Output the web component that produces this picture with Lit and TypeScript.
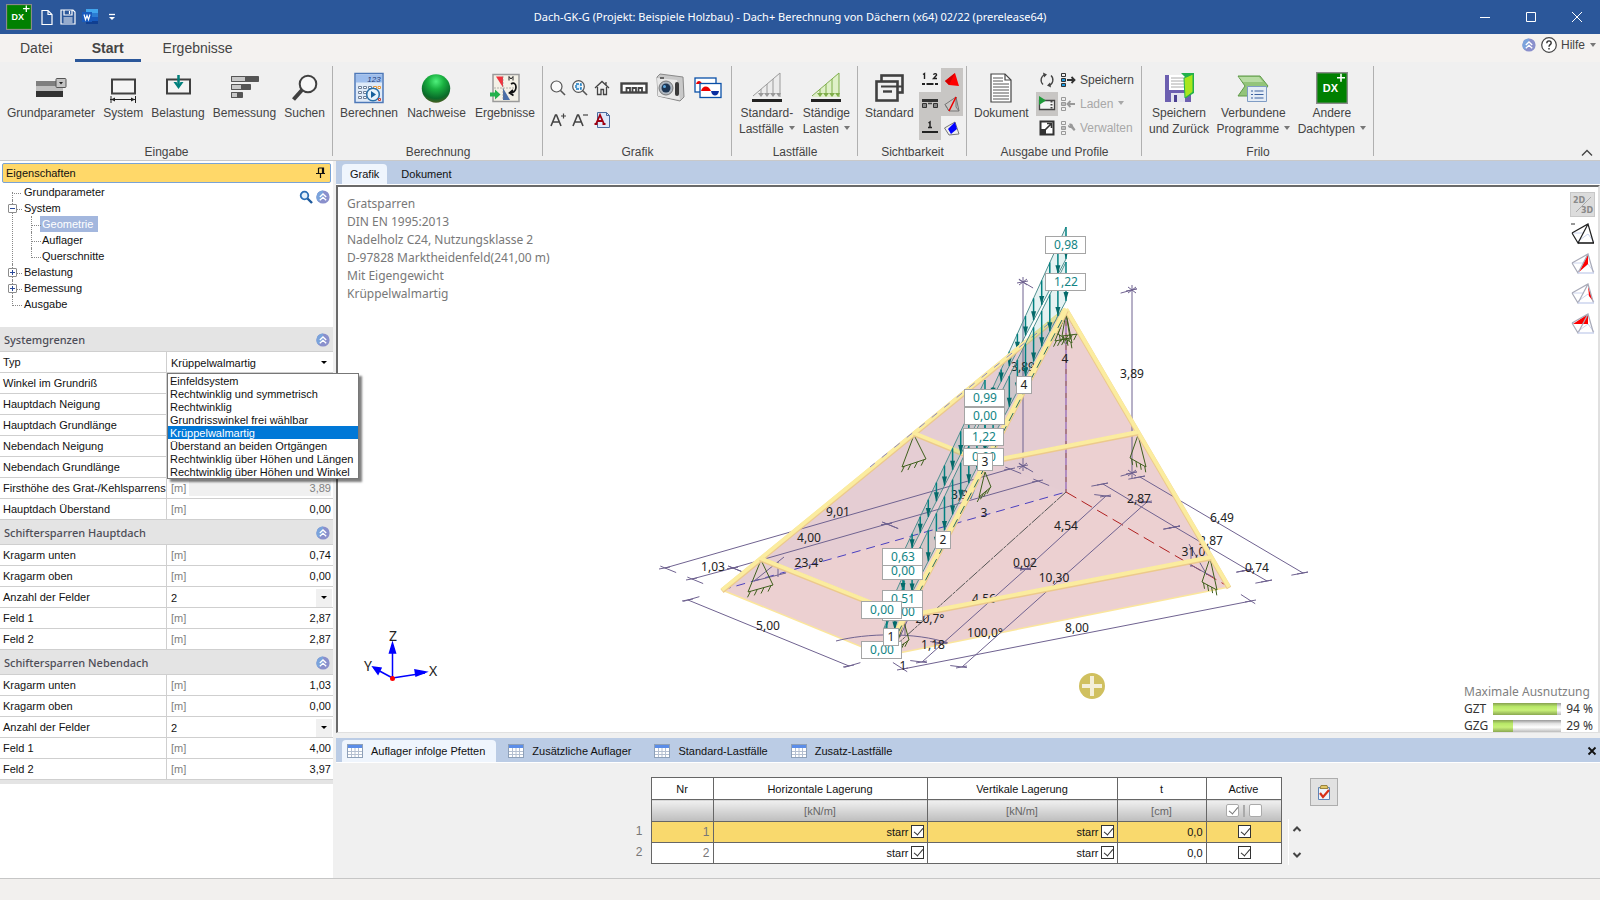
import { LitElement, html, svg, css, nothing, TemplateResult } from "lit";
import { customElement, state } from "lit/decorators.js";
import { classMap } from "lit/directives/class-map.js";

const icon = (w: number, h: number, body: TemplateResult) =>
  html`<svg class="ico" width=${w} height=${h} viewBox="0 0 ${w} ${h}" aria-hidden="true">${body}</svg>`;

/* ---------- ribbon icons ---------- */
const dxIcon = (s: number) => html`<svg class="ico" width=${s} height=${s} viewBox="0 0 32 32" aria-hidden="true">
  <rect x=".7" y=".7" width="30.6" height="30.6" fill="#008000" stroke="#8a8a8a" stroke-width="1.4"/>
  <text x="14.5" y="20" font-family="Liberation Sans Narrow, Liberation Sans, sans-serif" font-weight="bold" font-size="11" fill="#fff" text-anchor="middle">DX</text>
  <path d="M21 5.7h8M25 1.7v8" stroke="#fff" stroke-width="1.6"/></svg>`;
const iGrund = icon(32, 32, svg`<rect x="1" y="9" width="27" height="6" fill="#7f7f7f"/><rect x="1" y="14" width="27" height="6" fill="#bfbfbf"/><rect x="1" y="19" width="27" height="6" fill="#333"/><rect x="21" y="6.500" width="10" height="9" rx="1" fill="#c4c4c4" stroke="#555"/><path d="M24 10h4l-2 2.500z" fill="#222"/>`);
const iSystem = icon(32, 32, svg`<rect x="5" y="7.500" width="23" height="14" fill="#f4f4f4" stroke="#404040" stroke-width="2"/><path d="M3 27.500h26M4 24v7M28.500 24v7" stroke="#222" fill="none"/><path d="M4 27.500l4-2v4zM28 27.500l-4-2v4z" fill="#222"/>`);
const iLoad = icon(32, 32, svg`<rect x="5" y="7.500" width="23" height="14" fill="#f4f4f4" stroke="#404040" stroke-width="2"/><path d="M16.500 3v12" stroke="#00807c" stroke-width="2.500"/><path d="M11.500 10h3l2 3 2-3h3l-5 7z" fill="#00807c"/>`);
const iBem = icon(32, 32, svg`<g stroke="#555"><path fill="#555" d="M3.500 4.500h27v5h-27zM3.500 12.500h19v5h-19zM3.500 20.500h11v5h-11z"/><path fill="#c8c8c8" d="M3.500 4.500h14v5h-14zM3.500 12.500h10v5h-10zM3.500 20.500h6v5h-6z"/></g>`);
const iFind = icon(32, 32, svg`<circle cx="19" cy="12" r="8.300" fill="#f7f7f7" stroke="#404040" stroke-width="2"/><path d="M13 18L4.500 27.500" stroke="#404040" stroke-width="4"/>`);
const iCalc = icon(32, 32, svg`<rect x="2" y="1.500" width="28" height="29" fill="#dfeaf8" stroke="#4d78b8" stroke-width="1.500"/><rect x="3" y="2.500" width="26" height="8" fill="#9dbdec"/><text x="21" y="9.500" font-family="Liberation Sans, sans-serif" font-size="8" font-style="italic" text-anchor="middle" fill="#1d3c78">123</text><g fill="#fff" stroke="#6d7f99"><path d="M5.500 14.500h3v2h-3zM10.500 14.500h3v2h-3zM15.500 14.500h3v2h-3zM5.500 19.500h3v2h-3zM10.500 19.500h3v2h-3zM5.500 24.500h3v2h-3zM10.500 24.500h3v2h-3z"/><path d="M20.500 14.500h3v2h-3zM25 14.500h2.500v2h-2.500z" stroke="#e89a3c"/></g><circle cx="20" cy="22.500" r="6.300" fill="#e8f3fb" stroke="#2a70a8" stroke-width="1.500"/><path d="M18 19l5 3.500-5 3.500z" fill="#17609c"/><path d="M25.500 26.500h2v2h-2z" stroke="#d04030" fill="none"/>`);
const iBall = html`<svg class="ico" width="32" height="32" viewBox="0 0 32 32" aria-hidden="true"><defs><radialGradient id="gb" cx=".5" cy=".25" r=".8"><stop offset="0" stop-color="#4ff07c"/><stop offset=".35" stop-color="#19b040"/><stop offset=".75" stop-color="#0a6b2a"/><stop offset="1" stop-color="#5a5a20"/></radialGradient></defs><circle cx="16" cy="16.500" r="14.200" fill="url(#gb)"/></svg>`;
const iErg = icon(32, 32, svg`<rect x="4" y="2.500" width="26" height="27" fill="#f4f1e6" stroke="#9a9a9a" stroke-width="1.500"/><path d="M7 4.500h7v11z" fill="#f0323c"/><path d="M14 16v12h7z" fill="#4a6fa8"/><path d="M14 4v24M5 16h24" stroke="#888" stroke-dasharray="2 1" stroke-width=".6"/><path d="M22 12c3-2 5 0 5 3 0 4-3 6-6 6M24 18l-3.500 3 4 2.500" fill="none" stroke="#111" stroke-width="1.700"/><path d="M20 8.500v-4l2 2.500 2-2.500v4" fill="none" stroke="#222"/><path d="M1 20.500h5v-3l5.500 5-5.500 5v-3h-5z" fill="#22b14c"/>`);
const iZoom = icon(18, 18, svg`<circle cx="7.500" cy="7.500" r="5.500" fill="#fafafa" stroke="#555" stroke-width="1.200"/><path d="M11.500 11.500l4.500 4.500" stroke="#555" stroke-width="1.600"/>`);
const iZoomWin = icon(18, 18, svg`<circle cx="7.500" cy="7.500" r="5.800" fill="#fafafa" stroke="#555" stroke-width="1.200"/><path d="M11.500 11.500l4.500 4.500" stroke="#555" stroke-width="1.600"/><rect x="5" y="5" width="5" height="5" fill="#d8ecfa" stroke="#1879c0" stroke-width="1.400" stroke-dasharray="3 1"/>`);
const iHome = icon(18, 18, svg`<path d="M2 9l7-6.500 7 6.500M4.500 8v7.500h3.500v-5h2.500v5h3v-7.500M13 3v3" fill="none" stroke="#444" stroke-width="1.300"/>`);
const iRuler = icon(28, 16, svg`<rect x="1.500" y="3.500" width="25" height="9" fill="#fff" stroke="#444" stroke-width="2.400"/><path d="M6.500 12V8h3.500V12M12.500 12V8h3.500V12M18.500 12V8h3.500V12" fill="none" stroke="#444" stroke-width="1.800"/>`);
const iCam = icon(32, 32, svg`<path d="M2 5l3-3 23 3 1 20-4 4-22-5z" fill="#c9c9c9" stroke="#8a8a8a"/><path d="M2 6l20 2 3 20-22-4z" fill="#e8e8e8"/><rect x="20" y="10" width="4" height="14" rx="2" fill="#3a3a3a"/><circle cx="11" cy="16" r="7" fill="#aeb6bf" stroke="#777"/><circle cx="11" cy="16" r="4.500" fill="#1d3552"/><circle cx="9.500" cy="14.500" r="1.500" fill="#5da8e0"/><path d="M5 6h4" stroke="#666" stroke-width="2"/>`);
const iChart = icon(28, 24, svg`<rect x="1" y="2" width="21" height="14" fill="#fff" stroke="#0a50a8" stroke-width="1.300"/><path d="M2 8h6c-1-4-5-4-6 0z" fill="#e00"/><rect x="6" y="7.500" width="21" height="14" fill="#fff" stroke="#0a50a8" stroke-width="1.300"/><path d="M7 15c1-5 7-7 10 0z" fill="#e00"/><path d="M17 15c1 6 7 6 8 0z" fill="#0a2ea0"/>`);
const iAplus = icon(18, 18, svg`<path d="M2 15L6.500 4h1L12 15M4 11h6" fill="none" stroke="#444" stroke-width="1.600"/><path d="M12 5h5M14.500 2.500v5" stroke="#444" stroke-width="1.200"/>`);
const iAminus = icon(18, 18, svg`<path d="M2 15L6.500 4h1L12 15M4 11h6" fill="none" stroke="#444" stroke-width="1.600"/><path d="M12 4h5" stroke="#444" stroke-width="1.200"/>`);
const iAdoc = icon(18, 18, svg`<path d="M4.500 1.500h9l3 3v12h-12z" fill="#dde8fa" stroke="#4a6a9e"/><path d="M13.500 1.500v3h3" fill="none" stroke="#4a6a9e"/><path d="M3 13l4-9 4 9M4.500 10h5M1.500 13h3M9.500 13h3" fill="none" stroke="#a00010" stroke-width="1.800"/>`);
const iLoads = (c: string, f: string) => icon(32, 32, svg`<path d="M2 25L29 1v24z" fill=${f}/><path d="M2 24L29 1v24M22 7v17M16 12v12M10 17v7" fill="none" stroke=${c}/><path d="M7 21l3 4 3-4zM13 21l3 4 3-4zM19 21l3 4 3-4zM25 21l3 4 2-4z" fill=${c}/><path d="M1 28.500h30" stroke="#222" stroke-width="3"/>`);
const iStd = icon(32, 32, svg`<rect x="8.500" y="3.500" width="21" height="17" fill="none" stroke="#404040" stroke-width="2.600"/><rect x="3.500" y="9.500" width="21" height="19" fill="#f0f0f0" stroke="#404040" stroke-width="2.600"/><path d="M8 14.500h21" stroke="#404040" stroke-width="2"/><path d="M10 19.500h9" stroke="#404040" stroke-width="2.400"/>`);
const i12 = icon(18, 18, svg`<path d="M2 3.500L3.500 2.500V8M12.500 3.800c.5-1.800 3.300-1.500 3 .300L12.500 7.500h3.500" fill="none" stroke="#222" stroke-width="1.400"/><path d="M1 13h3M5.500 13h7M14 13h3" stroke="#222" stroke-width="1.800"/>`);
const iBridge = icon(18, 18, svg`<path d="M1 5.500h16" stroke="#333" stroke-width="3"/><path d="M1.500 8.500h4v4h-4zM12.500 8.500h4v4h-4z" fill="#888" stroke="#333"/><path d="M7 8.500h4" stroke="#444" stroke-width="1.500"/>`);
const iOne = icon(18, 18, svg`<path d="M7.500 4L9 3v5.500M7 8.500h4" fill="none" stroke="#222" stroke-width="1.500"/><path d="M1 13h16" stroke="#222" stroke-width="2"/>`);
const iRoofRed = icon(18, 18, svg`<path d="M2 10L12 2l4 13-10-1z" fill="#f00"/><path d="M2 10L12 2 6 14z" fill="#d40000"/>`);
const iRoofLine = icon(18, 18, svg`<path d="M2 9.500L13 2l3 14H6zM2 9.500L6 16M13 2v10l3 4" fill="none" stroke="#777"/><path d="M13 2L6 16" stroke="#e00" stroke-width="1.500"/>`);
const iRoofBlue = icon(18, 18, svg`<path d="M1.500 9L12 3l4 12-10 1z" fill="#eee" stroke="#777"/><path d="M12 3L5 10l3 5 6-5z" fill="#00f"/>`);
const iDoc = icon(32, 32, svg`<path d="M6 2h14l6 6v22H6z" fill="#fff" stroke="#444" stroke-width="1.200"/><path d="M20 2v6h6" fill="none" stroke="#444" stroke-width="1.200"/><path d="M8 6h10M8 9h10M8 12h16M8 15h16M8 18h16M8 21h16M8 24h16M8 27h16" stroke="#555"/>`);
const iSync = icon(18, 18, svg`<path d="M7 3.500a6 6 0 0 0-2 10M11 14.500a6 6 0 0 0 2-10" fill="none" stroke="#444" stroke-width="1.300"/><path d="M5 1.500l4 2-3 3zM13 16.500l-4-2 3-3z" fill="#444"/>`);
const iRun = icon(18, 18, svg`<path d="M1.500 5.500h15v9h-15z" fill="#f4f4f4" stroke="#444" stroke-width="1.300"/><path d="M13.500 6v8" stroke="#444" stroke-dasharray="1.500 1.500" stroke-width="2"/><path d="M1 1l7 4.500L1 10z" fill="#1f9a3a"/>`);
const iExport = icon(18, 18, svg`<rect x="2.500" y="2.500" width="13" height="13" fill="#fff" stroke="#333" stroke-width="2"/><path d="M2 10h6v6H2z" fill="#333"/><path d="M7 11l6-6M9 4.500h4.500V9" fill="none" stroke="#333" stroke-width="1.600"/>`);
const iProf = (kind: string) => icon(15, 14, svg`<g fill="none" stroke=${kind === "save" ? "#333" : "#999"}><path d="M.500.500h4v3h-4z"/><path d="M.500 5.500h4v3h-4z" fill=${kind === "save" ? "#1e9be0" : "#bbb"}/><path d="M.500 10.500h4v3h-4z" fill=${kind === "save" ? "#1e9be0" : "none"}/></g>${
  kind === "save" ? svg`<path d="M6 7h7M10.500 4l3 3-3 3" fill="none" stroke="#333" stroke-width="1.800"/>`
  : kind === "load" ? svg`<path d="M14 7H7M9.500 4l-3 3 3 3" fill="none" stroke="#999" stroke-width="1.800"/>`
  : svg`<path d="M8 3c2-1 4 0 4 2l2.500 3.500-1.500 1.500L10 7C8 7.500 6.500 5.500 7 4l2 1z" fill="#999"/>`}`);
const iSaveBack = icon(32, 32, svg`<path d="M2 3h26v27H2z" fill="#6c5fb0"/><path d="M6 3h17v15H6z" fill="#fff"/><path d="M8 6h13M8 9h13M8 12h13M8 15h13" stroke="#aaa"/><path d="M8 21h14v9H8z" fill="#e2e2ee"/><path d="M11 23h3v7h-3z" fill="#4a3f90"/><path d="M18 1h13v20l-8 5V6z" fill="#22b14c"/><path d="M21 6l9-4v18l-8 6z" fill="#a8e61d" stroke="#22b14c"/>`);
const iVerb = icon(32, 32, svg`<path d="M1 4h22l8 10-8 10H1l7-10z" fill="#93c47a" stroke="#5f9a48"/><path d="M2 5h20l4 5H6z" fill="#b7dca3"/><path d="M10.500 14.500h19v15h-19z" fill="#e4ecf6" stroke="#7f9cc4"/><path d="M14 19h2M17.500 19h9M14 22.500h2M17.500 22.500h9M14 26h2M17.500 26h9" stroke="#3c62a0"/>`);

const roofIcon = (fill: string | null, strong = false) => html`<svg class="ico" width="24" height="22" viewBox="0 0 24 22" aria-hidden="true">
  <path d="M6 19L17 11l6 8M1 10h12" fill="none" stroke="#ccd5ee"/>${fill ? svg`<path d=${fill} fill="#f00"/>` : nothing}
  <path d="M1 10L17 1l5.500 19M1 10l6 10L17 1" fill="none" stroke=${strong ? "#222" : "#a9abb9"} stroke-width="1.200"/>
  <path d="M7 20h16" stroke=${strong ? "#111" : "#ccd5ee"} stroke-width="1.500"/>
  ${strong ? svg`<path d="M0 1h4" stroke="#333"/>` : nothing}</svg>`;
const iTable = icon(16, 16, svg`<rect x=".500" y="1.500" width="15" height="13" fill="#fff" stroke="#8ea0b8"/><rect x="1" y="2" width="14" height="3" fill="#5b8de8"/><path d="M1 8.500h14M1 11.500h14M4.500 5v9M8 5v9M11.500 5v9" stroke="#b4bfd0"/>`);
const iClip = icon(16, 18, svg`<path d="M2.500 4.500h11v12h-11z" fill="#eef4fb" stroke="#5e84b8"/><path d="M5 2.500h6l1 3H4z" fill="#e2c766" stroke="#9a8440"/><path d="M4 10l3 4 6-7" fill="none" stroke="#d83018" stroke-width="2.200"/>`);
const iUp = html`<svg class="ico" width="14" height="14" viewBox="0 0 14 14" aria-hidden="true"><circle cx="7" cy="7" r="6.600" fill="#8a90cc"/><path d="M7 .4A6.600 6.600 0 0 0 .4 7c0 2 .8 3.600 2 4.700L7 8z" fill="#7ba4dc"/><path d="M3.800 7L7 4l3.200 3M3.800 10.300L7 7.300l3.200 3" fill="none" stroke="#fff" stroke-width="1.300"/></svg>`;

/* ---------- roof model drawing ---------- */
type P = [number, number];
const A: P = [1066, 309], B: P = [1066, 492], L: P = [722, 590], R: P = [1229, 587], F: P = [884, 656];
const pts = (...p: P[]) => p.map((q) => q.join(",")).join(" ");
const lerp = (a: P, b: P, x: number) => a[1] + ((x - a[0]) * (b[1] - a[1])) / (b[0] - a[0]);

const dims: [number, number, number, number, number, number][] = [
  [665, 568, 1010, 469, 0.93, 0.38], [692, 579, 733, 568, 0.93, 0.38], [733, 568, 887, 524, 0.93, 0.38], [887, 524, 1038, 481, 0.93, 0.38],
  [688, 600, 849, 666, 0.95, -0.28], [903, 669, 1251, 601, -0.84, -0.54],
  [962, 667, 1147, 502, -0.98, -0.12], [922, 662, 1026, 569, -0.98, -0.12], [1026, 569, 1106, 496, -0.98, -0.12],
  [1140, 477, 1303, 573, -0.97, 0.18], [1103, 484, 1175, 527, -0.97, 0.18], [1175, 527, 1248, 570, -0.97, 0.18], [1248, 570, 1267, 581, -0.97, 0.18],
  [1023, 277, 1023, 471, 0.84, 0.5], [1132, 285, 1132, 478, -0.95, 0.26],
];
const tick = (x: number, y: number, wx: number, wy: number) =>
  svg`<path d="M${x - wx * 5} ${y - wy * 5}L${x + wx * 12} ${y + wy * 12}M${x - 6} ${y + 1}L${x + 5} ${y - 1}"/>`;
const tickOf = (d: [number, number, number, number, number, number]) => {
  const upright = d[0] === d[2];
  const over = upright ? 5 : 0;
  const cross = (x: number, y: number) => (upright ? svg`<path d="M${x - 4} ${y - 3}l8 6M${x - 4} ${y + 3}l8-6"/>` : nothing);
  return svg`${tick(d[0], d[1] + over, d[4], d[5])}${cross(d[0], d[1] + over)}${tick(d[2], d[3] - over, d[4], d[5])}${cross(d[2], d[3] - over)}`;
};

const notes: [number, number, string][] = [
  [838, 512, "9,01"], [809, 538, "4,00"], [713, 567, "1,03"], [809, 563, "23,4°"], [768, 626, "5,00"], [963, 495, "3,97"],
  [984, 513, "3"], [1065, 359, "4"], [1023, 367, "3,89"], [1132, 374, "3,89"], [1066, 526, "4,54"], [1139, 499, "2,87"],
  [1222, 518, "6,49"], [1211, 541, "2,87"], [1196, 552, "31,0°"], [1257, 568, "0,74"], [1025, 563, "0,02"], [1054, 578, "10,30"],
  [984, 599, "4,56"], [1077, 628, "8,00"], [985, 633, "100,0°"], [933, 645, "1,18"], [930, 619, "20,7°"], [903, 666, "1"],
];
const loadTags: [number, number, string][] = [
  [1066, 245, "0,98"], [1066, 282, "1,22"], [985, 398, "0,99"], [985, 416, "0,00"], [984, 437, "1,22"], [984, 457, "0,00"],
  [903, 571, "0,00"], [903, 557, "0,63"], [903, 612, "0,00"], [903, 599, "0,51"], [882, 610, "0,00"], [882, 650, "0,00"],
];
const nodes: [number, number, string][] = [[1024, 385, "4"], [985, 462, "3"], [943, 540, "2"], [891, 637, "1"]];

const bands: [P, P, P, P][] = [
  [[1066, 227], [985, 405], [985, 412], [1066, 259]],
  [[1066, 262], [985, 425], [985, 452], [1066, 301]],
  [[985, 380], [903, 553], [903, 566], [985, 407]],
  [[985, 412], [903, 583], [903, 610], [985, 452]],
  [[903, 576], [884, 618], [884, 630], [903, 592]],
  [[903, 587], [884, 628], [884, 650], [903, 616]],
];
const band = ([a, b, c, d]: [P, P, P, P]) => {
  const xs: number[] = [];
  for (let x = a[0]; x >= b[0]; x -= 8.1) xs.push(x);
  return svg`<polygon points=${pts(a, b, c, d)} fill="#008080" fill-opacity=".1"/>
    <path d="M${a}L${b}M${d}L${c}" stroke="#4f8f8f" fill="none"/>
    ${xs.map((x) => {
      const t = lerp(a, b, x), e = lerp(d, c, x);
      return svg`<path d="M${x} ${t}V${e}" stroke="#008080" stroke-width="1.500"/><path d="M${x - 2.5} ${e - 9}h5L${x} ${e}z" fill="#046a6a"/>`;
    })}`;
};
const support = (p: P, q: P, r: P) => {
  const k = [0.1, 0.37, 0.64, 0.92];
  return svg`<path d="M${q}L${p}L${r}z${k.map((t) => {
    const x = q[0] + (r[0] - q[0]) * t, y = q[1] + (r[1] - q[1]) * t;
    return `M${x} ${y}l${r[1] > q[1] ? 1 : -3} 6`;
  }).join("")}" fill="none" stroke="#3f5f1c"/>`;
};
const beam = (a: P, b: P, w = 5) => svg`<path d="M${a}L${b}" stroke="#ecc98c" stroke-width=${w} transform="translate(0 1)"/><path d="M${a}L${b}" stroke="#fbec9f" stroke-width=${w - 1}/>`;
const label = (x: number, y: number, t: string, fill = "#222") =>
  svg`<text x=${x} y=${y + 4} text-anchor="middle" fill=${fill}>${t}</text>`;

const scene = html`<svg class="scene" viewBox="338 187 1260 545" role="img" aria-label="3D-Ansicht des Dachtragwerks">
  <polygon points=${pts(L, A, R, F)} fill="#ecd0d1"/>
  <polygon points=${pts(L, A, B)} fill="#e5cdd3"/>
  <polygon points=${pts(A, [985, 462], B)} fill="#e4ccd2"/>
  <path d="M${L}L${F}L${R}" fill="none" stroke="#fbe69c" stroke-width="1.500"/>
  <path d="M${L}L${B}" stroke="#4a40c0" stroke-dasharray="9 6" fill="none"/>
  <path d="M${B}L${R}" stroke="#b02020" stroke-dasharray="12 6" fill="none"/>
  <path d="M${B}L${F}" stroke="#555" stroke-dasharray="12 1 3 1" fill="none"/>
  <path d="M${A}V492" stroke="#7a4ab0" fill="none"/><path d="M${A}V492" stroke="#a06a50" stroke-dasharray="5 7" fill="none"/>
  <g stroke="#6f6290" fill="none">
    ${dims.map((d) => svg`<path d="M${d[0]} ${d[1]}L${d[2]} ${d[3]}"/>${tickOf(d)}`)}
    ${tick(942, 643, -0.98, -0.12)}
    <path d="M754 581L784 557M754 581L786 573M778 562v15M1189 544l18 31M1187 563l26 14M1191 547v20M836 641c30-8 80-9 112 2M900 637l8-18M905 620v15"/>
  </g>
  ${notes.map(([x, y, t]) => label(x, y, t))}
  ${support([914, 435], [902, 467], [926, 459])}${support([761, 560], [748, 592], [773, 585])}
  ${support([1138, 435], [1130, 458], [1146, 467])}${support([1210, 558], [1202, 582], [1217, 590])}
  ${support([985, 472], [979, 497], [991, 487])}${support([904, 622], [895, 650], [909, 640])}
  ${support([1066, 313], [1055, 341], [1070, 338])}${support([1066, 313], [1062, 336], [1078, 334])}${support([1066, 313], [1058, 334], [1072, 343])}
  ${bands.slice(0, 1).map(band)}
  ${beam(L, A)}
  <path d="M1062 313L870 467" stroke="#8a86c8" stroke-dasharray="7 9" fill="none"/>
  ${beam(A, R)}${beam([914, 433], [985, 462])}${beam([985, 462], [1138, 432])}${beam([760, 558], [905, 616])}${beam([905, 616], [1211, 557])}
  ${bands.slice(1).map(band)}
  ${beam(A, [887, 650], 6)}
  <path d="M1062 320L890 648" stroke="#2c6a60" stroke-dasharray="9 6" fill="none"/>
  ${loadTags.map(([x, y, t]) => svg`<rect x=${x - 20.5} y=${y - 8.5} width="40" height="17" fill="#fff" stroke="#a5a5a5"/>${label(x, y, t, "#128484")}`)}
  ${nodes.map(([x, y, t]) => svg`<rect x=${x - 7.5} y=${y - 8.5} width="15" height="17" fill="#fff" stroke="#a5a5a5"/>${label(x, y, t)}`)}
  <circle cx="1092" cy="686" r="13" fill="#d0c05f"/><path d="M1082 686h20M1092 676v20" stroke="#f4efd8" stroke-width="4"/>
  <g stroke="#00f" stroke-width="1.500" fill="#00f"><path d="M392.500 678V645M392.500 678L425 673M392.500 678L374 668"/><path d="M392.500 643l-3 10h6zM426 672l-11-2 1 6zM373 667l8 1-3 6z"/></g>
  <circle cx="392.500" cy="678.500" r="2.500" fill="#f00"/>
  <g class="axis" text-anchor="middle" fill="#222"><text x="393" y="641">Z</text><text x="433" y="676">X</text><text x="368" y="671">Y</text></g>
</svg>`;

/* ---------- data ---------- */
interface Row { label: string; unit?: string; value: string; select?: boolean; disabled?: boolean }
const sections: { title: string; rows: Row[] }[] = [
  { title: "Systemgrenzen", rows: [
    { label: "Typ", value: "Krüppelwalmartig", select: true },
    { label: "Winkel im Grundriß", value: "" },
    { label: "Hauptdach Neigung", value: "" },
    { label: "Hauptdach Grundlänge", value: "" },
    { label: "Nebendach Neigung", value: "" },
    { label: "Nebendach Grundlänge", value: "" },
    { label: "Firsthöhe des Grat-/Kehlsparrens", unit: "[m]", value: "3,89", disabled: true },
    { label: "Hauptdach Überstand", unit: "[m]", value: "0,00" },
  ] },
  { title: "Schiftersparren Hauptdach", rows: [
    { label: "Kragarm unten", unit: "[m]", value: "0,74" },
    { label: "Kragarm oben", unit: "[m]", value: "0,00" },
    { label: "Anzahl der Felder", value: "2", select: true },
    { label: "Feld 1", unit: "[m]", value: "2,87" },
    { label: "Feld 2", unit: "[m]", value: "2,87" },
  ] },
  { title: "Schiftersparren Nebendach", rows: [
    { label: "Kragarm unten", unit: "[m]", value: "1,03" },
    { label: "Kragarm oben", unit: "[m]", value: "0,00" },
    { label: "Anzahl der Felder", value: "2", select: true },
    { label: "Feld 1", unit: "[m]", value: "4,00" },
    { label: "Feld 2", unit: "[m]", value: "3,97" },
  ] },
];
const typOptions = ["Einfeldsystem", "Rechtwinklig und symmetrisch", "Rechtwinklig", "Grundrisswinkel frei wählbar", "Krüppelwalmartig",
  "Überstand an beiden Ortgängen", "Rechtwinklig über Höhen und Längen", "Rechtwinklig über Höhen und Winkel"];

const big = (ic: TemplateResult, lines: string[], drop = false) => html`<button class="big">${ic}${lines.map((l, i) =>
  html`<span>${l}${drop && i === lines.length - 1 ? html`<i class="caret"></i>` : nothing}</span>`)}</button>`;
const small = (ic: TemplateResult, title: string, on = false) =>
  html`<button class=${classMap({ small: true, on })} aria-label=${title}>${ic}</button>`;

@customElement("app-root")
export class AppRoot extends LitElement {
  @state() private typ = "Krüppelwalmartig";

  static styles = css`
    :host { display: flex; flex-direction: column; min-height: 100vh; background: #f0f0f0; color: #111;
      font: 11px/16px "Liberation Sans", Arial, sans-serif; }
    * { box-sizing: border-box; }
    button, input, select { font: inherit; color: inherit; margin: 0; padding: 0; border: 0; background: none; border-radius: 0; }
    button { display: flex; align-items: center; justify-content: center; }
    .ico { display: block; flex: none; }
    .caret { display: inline-block; border: 3px solid transparent; border-top: 4px solid #777; border-bottom: 0; margin-left: 5px; vertical-align: 3px; }

    .title { display: grid; grid-template-columns: 1fr auto 1fr; align-items: center; height: 34px; background: #2b579a; color: #fff; }
    .title h1 { margin: 0; font: 11px/16px "Noto Sans", sans-serif; padding-right: 20px; }
    .quick { display: flex; align-items: center; gap: 5px; padding-left: 6px; }
    .win { display: flex; justify-content: flex-end; }
    .win button { width: 46px; height: 34px; }

    .menu { display: flex; justify-content: space-between; height: 28px; background: #f4f2f0; font-size: 14px; color: #444; }
    .menu nav { display: flex; }
    .menu a { color: inherit; text-decoration: none; padding: 6px 22px 3px; line-height: 16px; height: 28px; }
    .menu a:first-child { padding-left: 20px; }
    .menu a.active { font-weight: bold; border-bottom: 3px solid #2b579a; padding: 6px 17px 3px; }
    .help { display: flex; align-items: flex-start; gap: 5px; padding: 3px 4px 0; font-size: 12px; }
    .help button { height: 16px; gap: 4px; }
    .help .caret { margin: 0; }

    .ribbon { display: flex; padding-top: 4px; border-bottom: 1px solid #c9c9c9; color: #444; font-size: 12px; }
    .group { display: flex; flex-direction: column; background: linear-gradient(#b0b0b0, #b0b0b0) right top / 1px 90px no-repeat; }
    .items { display: flex; justify-content: space-between; height: 78px; padding: 6px 8px 0 7px; }
    .group h2 { margin: 0; font: inherit; text-align: center; line-height: 16px; }
    .g1 { width: 333px; } .g2 { width: 210px; } .g3 { width: 189px; } .g4 { width: 126px; } .g5 { width: 109px; } .g6 { width: 175px; } .g7 { width: 232px; }
    .big { flex-direction: column; justify-content: flex-start; white-space: nowrap; }
    .big svg { margin-bottom: 1px; }
    .tools { display: grid; grid-template-columns: repeat(3, 22px); grid-auto-rows: 32px; margin-left: -3px; }
    .g3 .items { gap: 5px; padding-right: 10px; }
    .g3 .wide { height: 32px; }
    .small { width: 22px; height: 24px; }
    .tools .small { height: 32px; }
    .small.on { background: #c8c6c4; }
    .toggles { display: grid; grid-template-columns: repeat(2, 22px); grid-auto-rows: 24px; margin: -4px -4px 0 0; }
    .outs { display: grid; grid-template-columns: 22px auto; grid-auto-rows: 24px; column-gap: 3px; margin-top: -4px; justify-items: start; }
    .outs .txt { height: 24px; gap: 4px; }
    .outs .txt:disabled { color: #a8a8a8; }
    .outs .txt:disabled .caret { border-top-color: #a8a8a8; }
    .collapse { margin: auto 6px 0 auto; width: 14px; height: 14px; }

    main { flex: 1; display: grid; grid-template-columns: 333px minmax(0, 1fr); column-gap: 3px; }
    .side { background: #fff; display: flex; flex-direction: column; }
    .side > h2 { display: flex; justify-content: space-between; align-items: center; margin: 2px 2px 0; height: 20px; padding: 0 4px 0 3px; font: inherit;
      background: #ffd869; border: 1px solid #79a3d6; border-radius: 2px; }
    .treebox { display: flex; justify-content: space-between; padding: 1px 3px 15px 8px; }
    .find { display: flex; gap: 3px; height: 14px; margin-top: 6px; }
    .tree, .tree ul { list-style: none; margin: 0; padding: 0; }
    .tree li { position: relative; padding-left: 16px; }
    .tree li li { padding-left: 18px; }
    .tree li::before { content: ""; position: absolute; left: 4px; top: 0; width: 9px; height: 9px; border-left: 1px dotted #888; border-bottom: 1px dotted #888; }
    .tree li:not(:last-child)::after { content: ""; position: absolute; left: 4px; top: 0; bottom: 0; border-left: 1px dotted #888; }
    .tree > li:first-child::before { border-left: 0; }
    .tree > li:first-child::after { top: 8px; }
    .tree li li::before { left: 7px; } .tree li li:not(:last-child)::after { left: 7px; }
    .tree a { color: #111; text-decoration: none; display: inline-block; height: 16px; }
    .tree a.sel { background: #a3b7de; color: #fff; padding: 0 5px 0 2px; margin-left: -2px; }
    .exp { position: absolute; z-index: 1; left: 0; top: 4px; width: 9px; height: 9px; border: 1px solid #8c8c8c; background: #fff; border-radius: 1px; }
    .exp::before { content: ""; position: absolute; left: 1px; top: 3px; width: 5px; height: 1px; background: #2a4a9a; }
    .exp.plus::after { content: ""; position: absolute; left: 3px; top: 1px; width: 1px; height: 5px; background: #2a4a9a; }

    .sec { display: flex; justify-content: space-between; align-items: center; margin: 0; height: 25px; padding: 1px 3px 0 4px; background: #e4e4e4; border-bottom: 1px solid #cfcfcf;
      font: 500 11px/16px "Noto Sans", sans-serif; color: #4d4d57; }
    .row { position: relative; display: grid; grid-template-columns: 166px 1fr; height: 21px; border-bottom: 1px solid #cfcfcf; }
    .row > label { padding-left: 3px; line-height: 20px; white-space: nowrap; }
    .val { display: flex; align-items: center; border-left: 1px solid #cfcfcf; padding: 0 5px 0 4px; }
    .unit { width: 18px; color: #808080; }
    .val input { flex: 1; min-width: 0; height: 16px; text-align: right; }
    .val input:disabled { background: #f0f0f0; color: #808080; }
    .val.sel { padding: 1px 1px 0 4px; }
    .val select { flex: 1; height: 18px; appearance: none;
      background: linear-gradient(#f0f0f0, #f0f0f0) right / 16px 18px no-repeat; }
    .val.sel::after { content: ""; position: absolute; right: 6px; top: 9px; border: 3px solid transparent; border-top-color: #000; border-bottom: 0; pointer-events: none; }
    .pop { position: absolute; z-index: 5; left: 167px; top: 21px; width: 192px; margin: 0; padding: 0; list-style: none; background: #fff; border: 1px solid #777; box-shadow: 3px 3px 2px rgba(0,0,0,.5); }
    .pop li { height: 13px; line-height: 14px; padding-left: 2px; white-space: nowrap; cursor: default; }
    .pop li.on { background: #0078d7; color: #fff; }
    .end { height: 4px; background: #e4e4e4; }

    .work { display: flex; flex-direction: column; min-width: 0; }
    .tabs { display: flex; align-items: flex-end; background: #bbcce5; border-bottom: 1px solid #fff; height: 24px; padding-left: 6px; }
    .tabs button { height: 20px; padding: 0 8px; }
    .tabs button.active { background: #eff5fd; border-radius: 4px 4px 0 0; }
    .tabs.top button + button { margin-left: 6px; }
    .tabs.low { height: 25px; margin-top: 5px; align-items: stretch; padding-top: 2px; }
    .tabs.low button { height: 22px; gap: 8px; padding: 0 11px 0 5px; margin-right: 7px; }
    .tabs.low .close { margin: 0 0 0 auto; padding: 0 3px; }
    .canvas { position: relative; flex: 1; min-height: 548px; background: #fff; border: 2px solid #e0e0e0; border-top-color: #6a6a6a; border-left-color: #6a6a6a; border-bottom-width: 1px;
      font: 12px/18px "Noto Sans", sans-serif; }
    .scene { position: absolute; inset: 0; width: 100%; height: 100%; }
    .axis { font-size: 14px; }
    .info { position: absolute; left: 9px; top: 8px; margin: 0; color: #787878; }
    .views { position: absolute; right: 3px; top: 5px; display: flex; flex-direction: column; gap: 8px; }
    .views button { height: 22px; }
    .views .dim { width: 25px; height: 25px; background: #dcdcdc; border: 1px solid #c8c8c8; margin-bottom: -2px; }
    .util { position: absolute; right: 5px; bottom: -2px; display: grid; grid-template-columns: 29px 68px 32px; align-items: center; line-height: 17px; color: #333; }
    .util h3 { grid-column: 1 / -1; margin: 0; font: inherit; color: #808080; }
    .util span:nth-of-type(even) { text-align: right; white-space: nowrap; }
    .bar { height: 12px; background: linear-gradient(#999, #e4e4e4 30%, #fff 60%, #bbb); }
    .fill { height: 100%; background: linear-gradient(#86a050, #b8e868 30%, #c8f078 60%, #8aa850); }

    .lower { display: grid; grid-template-columns: 1fr auto 1fr; align-items: start; height: 115px; padding: 14px 4px 0 0; }
    .nums { display: grid; justify-content: end; margin: 44px 8px 0 0; line-height: 21px; color: #777; font-size: 12px; }
    table { border-collapse: collapse; background: #fff; table-layout: fixed; width: 630px; }
    th, td { border: 1px solid #666; height: 21px; padding: 0 3px; font-weight: normal; }
    .heads th { height: 22px; }
    .units th { height: 22px; background: linear-gradient(#f0f0f0, #bdbdbd); color: #666; }
    td { text-align: right; }
    td.c { text-align: center; }
    td.n { color: #777; font-size: 12px; }
    tr.cur td { background: #f9d96d; }
    input[type="checkbox"] { appearance: none; position: relative; width: 13px; height: 13px; border: 1px solid #333; background: #fff; vertical-align: -2px; margin-left: 2px; }
    input[type="checkbox"]:checked::after { content: ""; position: absolute; left: 4px; top: 0; width: 4px; height: 8px; border: solid #333; border-width: 0 1px 1px 0; transform: rotate(40deg); }
    .units input[type="checkbox"] { border-color: #aaa; border-radius: 2px; margin: 0 4px; }
    .units input[type="checkbox"]:checked::after { border-color: #777; }
    .units i { display: inline-block; width: 2px; height: 12px; background: #aaa; vertical-align: -2px; }
    .aside { display: flex; gap: 6px; }
    .scroll { display: flex; flex-direction: column; justify-content: space-between; margin: 42px 0 0 6px; height: 46px; border-left: 1px solid #fff; padding-left: 2px; }
    .scroll button { width: 13px; height: 20px; }
    .clip { width: 28px; height: 28px; margin-top: 1px; background: #e1e1e1; border: 1px solid #adadad; }
    footer { height: 22px; background: #f2f0ee; border-top: 1px solid #c6c6c6; }
  `;

  private row(r: Row, s: number, i: number) {
    const id = `f${s}-${i}`;
    const open = r.label === "Typ";
    return html`<div class="row"><label for=${id}>${r.label}</label>
      <div class=${classMap({ val: true, sel: !!r.select })}>
        ${r.select
          ? html`<select id=${id}>${(open ? typOptions : ["1", "2", "3"]).map((o) => html`<option ?selected=${o === (open ? this.typ : r.value)}>${o}</option>`)}</select>`
          : html`${r.unit ? html`<span class="unit">${r.unit}</span>` : nothing}<input id=${id} .value=${r.value} ?disabled=${r.disabled}>`}
      </div>
      ${open ? html`<ul class="pop" role="listbox" aria-label="Typ">${typOptions.map((o) =>
        html`<li role="option" aria-selected=${o === this.typ} class=${classMap({ on: o === this.typ })} @click=${() => (this.typ = o)}>${o}</li>`)}</ul>` : nothing}
    </div>`;
  }

  private dataRow(n: number) {
    return html`<tr class=${n === 1 ? "cur" : ""}><td class="n">${n}</td>
      <td>starr<input type="checkbox" checked aria-label="Horizontal starr ${n}"></td>
      <td>starr<input type="checkbox" checked aria-label="Vertikal starr ${n}"></td>
      <td>0,0</td><td class="c"><input type="checkbox" checked aria-label="Active ${n}"></td></tr>`;
  }

  render() {
    return html`
      <header class="title">
        <div class="quick">${dxIcon(26)}
          <button aria-label="Neu">${icon(18, 18, svg`<path d="M5 2.500h6l4 4v10H5zM11 2.500v4h4" fill="none" stroke="#fff" stroke-width="1.200"/>`)}</button>
          <button aria-label="Speichern">${icon(16, 16, svg`<path d="M1 1h12l2 2v12H1zM4 1v5h8V1M3.500 9h9M3.500 11h9M3.500 13h9M9.500 2v3" fill="none" stroke="#fff" stroke-width="1.200"/>`)}</button>
          <button aria-label="Word">${icon(18, 18, svg`<path d="M5 1h12v4H5z" fill="#41a5ee"/><path d="M5 5h12v4H5z" fill="#2b7cd3"/><path d="M5 9h12v4H5z" fill="#185abd"/><path d="M5 13h12v3H5z" fill="#103f91"/><path d="M1 4h10v10H1z" fill="#185abd"/><path d="M3 6.500l1.500 5L6 7.500l1.500 4 1.500-5" fill="none" stroke="#fff" stroke-width="1.200"/>`)}</button>
          <button aria-label="Anpassen">${icon(16, 12, svg`<path d="M5 3.500h6" stroke="#fff" stroke-width="1.300"/><path d="M5 6h6L8 9z" fill="#fff"/>`)}</button>
        </div>
        <h1>Dach-GK-G (Projekt: Beispiele Holzbau) - Dach+ Berechnung von Dächern (x64) 02/22 (prerelease64)</h1>
        <div class="win">
          <button aria-label="Minimieren">${icon(12, 12, svg`<path d="M1 6.500h10" stroke="#fff"/>`)}</button>
          <button aria-label="Maximieren">${icon(12, 12, svg`<path d="M1.500 1.500h9v9h-9z" fill="none" stroke="#fff"/>`)}</button>
          <button aria-label="Schließen">${icon(12, 12, svg`<path d="M1 1l10 10M11 1L1 11" stroke="#fff"/>`)}</button>
        </div>
      </header>
      <div class="menu">
        <nav><a href="#">Datei</a><a href="#" class="active">Start</a><a href="#">Ergebnisse</a></nav>
        <div class="help"><button aria-label="Einklappen">${iUp}</button>
          <button>${icon(16, 16, svg`<circle cx="8" cy="8" r="7.300" fill="#fff" stroke="#444" stroke-width="1.200"/><path d="M5.800 6.200c0-3 4.400-3 4.400-.3 0 1.700-2.200 1.800-2.200 3.800M8 11v1.500" fill="none" stroke="#333" stroke-width="1.400"/>`)}Hilfe</button><button aria-label="Hilfe-Menü"><i class="caret"></i></button></div>
      </div>
      <div class="ribbon">
        <section class="group g1"><div class="items">
          ${big(iGrund, ["Grundparameter"])}${big(iSystem, ["System"])}${big(iLoad, ["Belastung"])}${big(iBem, ["Bemessung"])}${big(iFind, ["Suchen"])}
        </div><h2>Eingabe</h2></section>
        <section class="group g2"><div class="items">
          ${big(iCalc, ["Berechnen"])}${big(iBall, ["Nachweise"])}${big(iErg, ["Ergebnisse"])}
        </div><h2>Berechnung</h2></section>
        <section class="group g3"><div class="items">
          <div class="tools">${small(iZoom, "Zoom")}${small(iZoomWin, "Zoom Fenster")}${small(iHome, "Gesamtansicht")}${small(iAplus, "Schrift größer")}${small(iAminus, "Schrift kleiner")}${small(iAdoc, "Schriftart")}</div>
          <button class="wide" aria-label="Messen">${iRuler}</button><button class="wide" aria-label="Foto">${iCam}</button><button class="wide" aria-label="Grafiken">${iChart}</button>
        </div><h2>Grafik</h2></section>
        <section class="group g4"><div class="items">
          ${big(iLoads("#9a9a9a", "#ececec"), ["Standard-", "Lastfälle"], true)}${big(iLoads("#7fae4a", "#dff0c8"), ["Ständige", "Lasten"], true)}
        </div><h2>Lastfälle</h2></section>
        <section class="group g5"><div class="items">
          ${big(iStd, ["Standard"])}
          <div class="toggles">${small(i12, "Bemaßung")}${small(iRoofRed, "Dachfläche", true)}${small(iBridge, "Auflager", true)}${small(iRoofLine, "Sparren", true)}${small(iOne, "Knoten", true)}${small(iRoofBlue, "Flächen")}</div>
        </div><h2>Sichtbarkeit</h2></section>
        <section class="group g6"><div class="items">
          ${big(iDoc, ["Dokument"])}
          <div class="outs">${small(iSync, "Aktualisieren")}<button class="txt">${iProf("save")}Speichern</button>
            ${small(iRun, "Vorschau", true)}<button class="txt" disabled>${iProf("load")}<span>Laden<i class="caret"></i></span></button>
            ${small(iExport, "Export")}<button class="txt" disabled>${iProf("edit")}Verwalten</button></div>
        </div><h2>Ausgabe und Profile</h2></section>
        <section class="group g7"><div class="items">
          ${big(iSaveBack, ["Speichern", "und Zurück"])}${big(iVerb, ["Verbundene", "Programme"], true)}${big(dxIcon(32), ["Andere", "Dachtypen"], true)}
        </div><h2>Frilo</h2></section>
        <button class="collapse" aria-label="Menüband einklappen">${icon(12, 8, svg`<path d="M1 6.500l5-5 5 5" fill="none" stroke="#444" stroke-width="1.300"/>`)}</button>
      </div>
      <main>
        <aside class="side">
          <h2>Eigenschaften<button aria-label="Anheften">${icon(10, 12, svg`<path d="M2.500 1h5v5.500M2.500 1v5.500M6.500 1v5.500M0 6.500h9M4.500 7v4" fill="none" stroke="#111" stroke-width="1.200"/>`)}</button></h2>
          <div class="treebox">
            <ul class="tree">
              <li><a href="#">Grundparameter</a></li>
              <li><span class="exp"></span><a href="#">System</a>
                <ul><li><a href="#" class="sel">Geometrie</a></li><li><a href="#">Auflager</a></li><li><a href="#">Querschnitte</a></li></ul></li>
              <li><span class="exp plus"></span><a href="#">Belastung</a></li>
              <li><span class="exp plus"></span><a href="#">Bemessung</a></li>
              <li><a href="#">Ausgabe</a></li>
            </ul>
            <div class="find"><button aria-label="Suchen">${icon(14, 14, svg`<circle cx="5.500" cy="5.500" r="3.800" fill="#e4f0fa" stroke="#2a6db4" stroke-width="1.800"/><path d="M8.500 8.500l4.500 4.500" stroke="#1f5a9c" stroke-width="2.400"/>`)}</button><button aria-label="Alle einklappen">${iUp}</button></div>
          </div>
          ${sections.map((s, si) => html`<h3 class="sec">${s.title}<button aria-label="${s.title} einklappen">${iUp}</button></h3>${s.rows.map((r, i) => this.row(r, si, i))}`)}
          <div class="end"></div>
        </aside>
        <div class="work">
          <div class="tabs top"><button class="active">Grafik</button><button>Dokument</button></div>
          <div class="canvas">
            ${scene}
            <p class="info">Gratsparren<br>DIN EN 1995:2013<br>Nadelholz C24, Nutzungsklasse 2<br>D-97828 Marktheidenfeld(241,00 m)<br>Mit Eigengewicht<br>Krüppelwalmartig</p>
            <div class="views">
              <button class="dim" aria-label="2D/3D">${icon(24, 24, svg`<text x="2" y="10" font-family="DejaVu Sans, sans-serif" font-weight="bold" font-size="8" fill="#8a8a8a">2D</text><text x="10" y="20" font-family="DejaVu Sans, sans-serif" font-weight="bold" font-size="8" fill="#8a8a8a">3D</text><path d="M5 19L20 4" stroke="#aaa"/>`)}</button>
              <button aria-label="Perspektive">${roofIcon(null, true)}</button>
              <button aria-label="Ansicht Grat">${roofIcon("M17 1v10l-9 8z")}</button>
              <button aria-label="Ansicht rechts">${roofIcon("M17 3l5 15-4-5z")}</button>
              <button aria-label="Ansicht links">${roofIcon("M17 1v10H2z")}</button>
            </div>
            <div class="util"><h3>Maximale Ausnutzung</h3>
              <span>GZT</span><div class="bar"><div class="fill" style="width:94%"></div></div><span>94 %</span>
              <span>GZG</span><div class="bar"><div class="fill" style="width:29%"></div></div><span>29 %</span></div>
          </div>
          <div class="tabs low">
            <button class="active">${iTable}Auflager infolge Pfetten</button><button>${iTable}Zusätzliche Auflager</button><button>${iTable}Standard-Lastfälle</button><button>${iTable}Zusatz-Lastfälle</button>
            <button class="close" aria-label="Schließen">${icon(10, 10, svg`<path d="M1.500 1.500l7 7M8.500 1.500l-7 7" stroke="#111" stroke-width="1.800"/>`)}</button>
          </div>
          <div class="lower">
            <div class="nums"><span>1</span><span>2</span></div>
            <table>
              <colgroup><col style="width:62px"><col style="width:214px"><col style="width:190px"><col style="width:89px"><col style="width:75px"></colgroup>
              <thead>
                <tr class="heads"><th>Nr</th><th>Horizontale Lagerung</th><th>Vertikale Lagerung</th><th>t</th><th>Active</th></tr>
                <tr class="units"><th></th><th>[kN/m]</th><th>[kN/m]</th><th>[cm]</th><th><input type="checkbox" checked aria-label="Alle aktivieren"><i></i><input type="checkbox" aria-label="Alle deaktivieren"></th></tr>
              </thead>
              <tbody>${this.dataRow(1)}${this.dataRow(2)}</tbody>
            </table>
            <div class="aside">
              <div class="scroll"><button aria-label="Nach oben">${icon(10, 8, svg`<path d="M1.500 6L5 2.500 8.500 6" fill="none" stroke="#444" stroke-width="2"/>`)}</button><button aria-label="Nach unten">${icon(10, 8, svg`<path d="M1.500 2L5 5.500 8.500 2" fill="none" stroke="#444" stroke-width="2"/>`)}</button></div>
              <button class="clip" aria-label="Prüfen">${iClip}</button>
            </div>
          </div>
        </div>
      </main>
      <footer></footer>`;
  }
}
